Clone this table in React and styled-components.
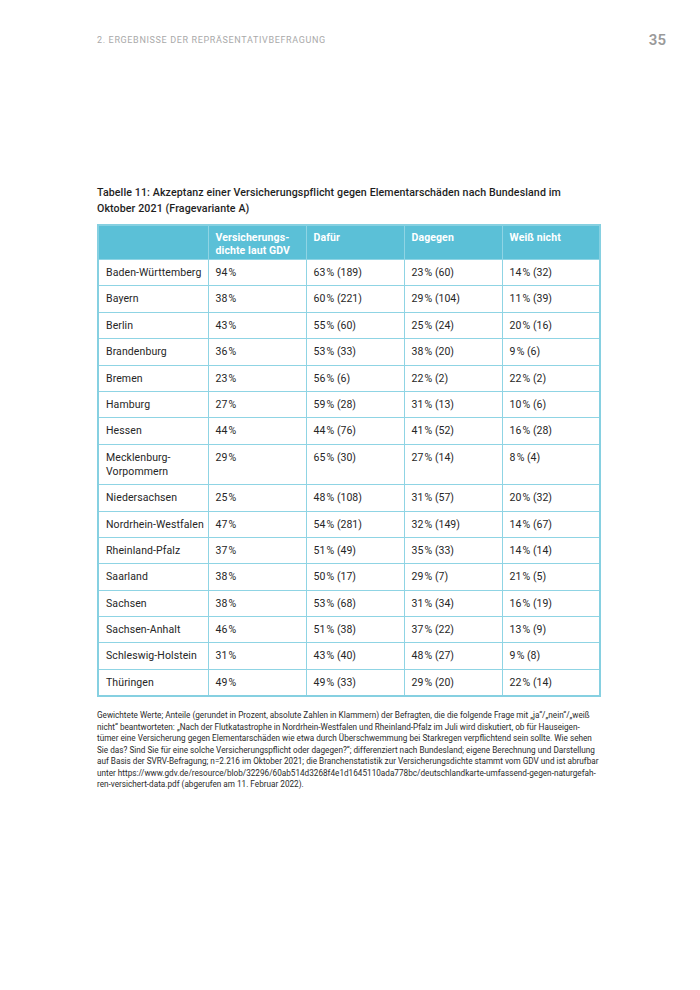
import React from 'react'
import styled, {createGlobalStyle} from 'styled-components'

const GlobalStyle = createGlobalStyle`
	html, body {
		margin: 0;
		padding: 0;
		background: #ffffff;
	}
	body {
		font-family: Roboto, "Liberation Sans", sans-serif;
		color: #222222;
	}
`

const T = '\u202F%'

const rows = [
	['Baden-Württemberg', '94', '63', '189', '23', '60', '14', '32'],
	['Bayern', '38', '60', '221', '29', '104', '11', '39'],
	['Berlin', '43', '55', '60', '25', '24', '20', '16'],
	['Brandenburg', '36', '53', '33', '38', '20', '9', '6'],
	['Bremen', '23', '56', '6', '22', '2', '22', '2'],
	['Hamburg', '27', '59', '28', '31', '13', '10', '6'],
	['Hessen', '44', '44', '76', '41', '52', '16', '28'],
	['Mecklenburg-\nVorpommern', '29', '65', '30', '27', '14', '8', '4'],
	['Niedersachsen', '25', '48', '108', '31', '57', '20', '32'],
	['Nordrhein-Westfalen', '47', '54', '281', '32', '149', '14', '67'],
	['Rheinland-Pfalz', '37', '51', '49', '35', '33', '14', '14'],
	['Saarland', '38', '50', '17', '29', '7', '21', '5'],
	['Sachsen', '38', '53', '68', '31', '34', '16', '19'],
	['Sachsen-Anhalt', '46', '51', '38', '37', '22', '13', '9'],
	['Schleswig-Holstein', '31', '43', '40', '48', '27', '9', '8'],
	['Thüringen', '49', '49', '33', '29', '20', '22', '14'],
]

const noteLines = [
	'Gewichtete Werte; Anteile (gerundet in Prozent, absolute Zahlen in Klammern) der Befragten, die die folgende Frage mit „ja“/„nein“/„weiß',
	'nicht“ beantworteten: „Nach der Flutkatastrophe in Nordrhein-Westfalen und Rheinland-Pfalz im Juli wird diskutiert, ob für Hauseigen-',
	'tümer eine Versicherung gegen Elementarschäden wie etwa durch Überschwemmung bei Starkregen verpflichtend sein sollte. Wie sehen',
	'Sie das? Sind Sie für eine solche Versicherungspflicht oder dagegen?“; differenziert nach Bundesland; eigene Berechnung und Darstellung',
	'auf Basis der SVRV-Befragung; n=2.216 im Oktober 2021; die Branchenstatistik zur Versicherungsdichte stammt vom GDV und ist abrufbar',
	'unter https://www.gdv.de/resource/blob/32296/60ab514d3268f4e1d1645110ada778bc/deutschlandkarte-umfassend-gegen-naturgefah-',
	'ren-versichert-data.pdf (abgerufen am 11. Februar 2022).',
]

export default function App() {
	return (
		<Page>
			<GlobalStyle/>
			<RunningHead>
				<Chapter>2. Ergebnisse der Repräsentativbefragung</Chapter>
				<PageNo>35</PageNo>
			</RunningHead>

			<Content>
				<Caption>
					Tabelle 11: Akzeptanz einer Versicherungspflicht gegen Elementarschäden nach Bundesland im<br/>
					Oktober 2021 (Fragevariante A)
				</Caption>

				<Table>
					<colgroup>
						<col style={{width: 110}}/>
						<col style={{width: 98}}/>
						<col style={{width: 98}}/>
						<col style={{width: 98}}/>
						<col style={{width: 98}}/>
					</colgroup>
					<thead>
						<tr>
							<Th></Th>
							<Th>Versicherungs-<br/>dichte laut GDV</Th>
							<Th>Dafür</Th>
							<Th>Dagegen</Th>
							<Th>Weiß nicht</Th>
						</tr>
					</thead>
					<tbody>
						{rows.map(r => (
							<tr key={r[0]}>
								<Td>{r[0].split('\n').map((s, i) => <Line key={i}>{s}</Line>)}</Td>
								<Td>{r[1]}{T}</Td>
								<Td>{r[2]}{T} ({r[3]})</Td>
								<Td>{r[4]}{T} ({r[5]})</Td>
								<Td>{r[6]}{T} ({r[7]})</Td>
							</tr>
						))}
					</tbody>
				</Table>

				<Note>
					{noteLines.map((l, i) => <Line key={i}>{l}</Line>)}
				</Note>
			</Content>
		</Page>
	)
}


const Page = styled.div`
	width: 700px;
	height: 990px;
	box-sizing: border-box;
	padding: 32px 34px 0 97px;
	background: #ffffff;
`

const RunningHead = styled.header`
	display: flex;
	justify-content: space-between;
	align-items: center;
	height: 16px;
`

const Chapter = styled.span`
	font-size: 9px;
	letter-spacing: 0.65px;
	text-transform: uppercase;
	color: #a9a9a9;
`

const PageNo = styled.span`
	font-size: 15px;
	font-weight: 600;
	color: #9a9a9a;
`

const Content = styled.main`
	width: 502px;
	padding-top: 137px;
`

const Caption = styled.div`
	font-size: 10.65px;
	font-weight: 500;
	line-height: 16px;
	letter-spacing: 0.1px;
	color: #1e1e1e;
	white-space: nowrap;
	margin-bottom: 7px;
`

const Table = styled.table`
	width: 502px;
	table-layout: fixed;
	border-collapse: collapse;
	border: 2px solid #86d0e1;
	font-size: 10.5px;
	letter-spacing: 0.1px;
`

const Th = styled.th`
	background: #5bc0d7;
	color: #ffffff;
	font-weight: 700;
	text-align: left;
	vertical-align: top;
	line-height: 13px;
	padding: 5px 7px 2px;
	border-left: 1px solid #8fd4e4;
	&:first-child {
		border-left: none;
	}
`

const Td = styled.td`
	vertical-align: top;
	text-align: left;
	line-height: 14px;
	padding: 6px 7px 5.4px;
	border: 1px solid #8fd4e4;
	color: #262626;
	white-space: nowrap;
`

const Line = styled.span`
	display: block;
	white-space: nowrap;
`

const Note = styled.div`
	margin-top: 13px;
	font-size: 8.2px;
	line-height: 11.5px;
	color: #2a2a2a;
`
